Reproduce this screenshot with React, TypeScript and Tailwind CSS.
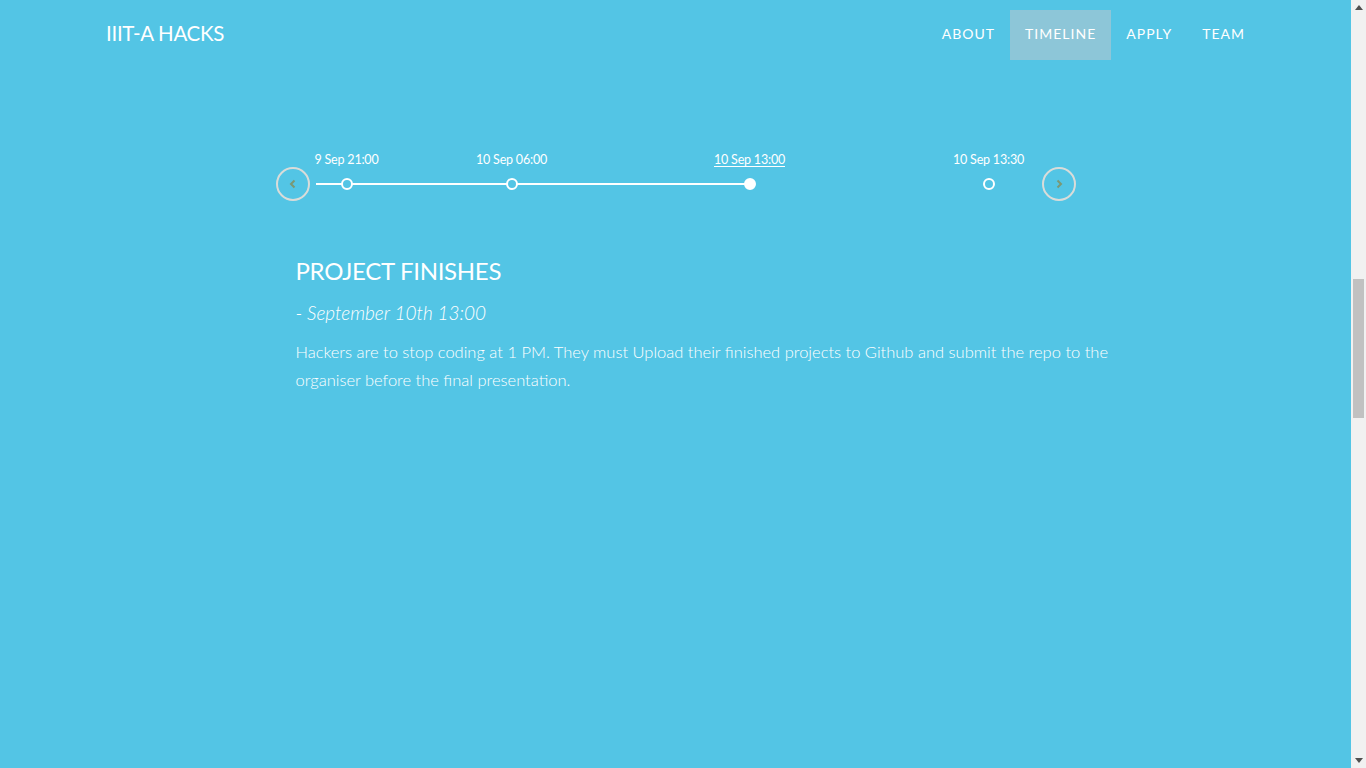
import React from "react";

const font = { fontFamily: '"Lato", "Open Sans", sans-serif' };

const events = [
  { label: "9 Sep 21:00", x: 31, filled: false, active: false },
  { label: "10 Sep 06:00", x: 196, filled: false, active: false },
  { label: "10 Sep 13:00", x: 434, filled: true, active: true },
  { label: "10 Sep 13:30", x: 673, filled: false, active: false },
];

function Arrow({ dir }: { dir: "left" | "right" }) {
  return (
    <button className="w-[34px] h-[34px] rounded-full border-2 border-[#d9dcd9] flex items-center justify-center shrink-0">
      <svg width="12" height="12" viewBox="0 0 12 12">
        {dir === "left" ? (
          <path d="M7.5 2.5 L4 6 L7.5 9.5" stroke="#7b9874" strokeWidth="2" fill="none" />
        ) : (
          <path d="M4.5 2.5 L8 6 L4.5 9.5" stroke="#7b9874" strokeWidth="2" fill="none" />
        )}
      </svg>
    </button>
  );
}

function ScrollBar() {
  return (
    <div className="w-[15px] h-[768px] bg-[#f1f1f1] flex flex-col items-center shrink-0">
      <div className="h-[15px] flex items-center justify-center">
        <svg width="8" height="5" viewBox="0 0 8 5">
          <path d="M0 5 L4 0 L8 5 Z" fill="#505050" />
        </svg>
      </div>
      <div className="flex-1 w-full flex flex-col">
        <div className="h-[264px]" />
        <div className="h-[139px] mx-[2px] bg-[#c1c1c1]" />
      </div>
      <div className="h-[15px] flex items-center justify-center">
        <svg width="8" height="5" viewBox="0 0 8 5">
          <path d="M0 0 L8 0 L4 5 Z" fill="#505050" />
        </svg>
      </div>
    </div>
  );
}

export default function App() {
  return (
    <div className="h-[768px] flex overflow-hidden bg-[#53c5e5] text-white" style={font}>
      <div className="flex-1">
        <nav className="flex items-center justify-between pl-[106px] pr-[91px] pt-[10px]">
          <div className="text-[20.5px] tracking-[-0.3px] leading-none pb-[4px]">IIIT-A HACKS</div>
          <ul className="flex text-[14px] tracking-[1px]">
            {["ABOUT", "TIMELINE", "APPLY", "TEAM"].map((n) => (
              <li
                key={n}
                className={
                  "h-[50px] flex items-center px-[15px] pb-[3px] " + (n === "TIMELINE" ? "bg-[#8dc6d8]" : "")
                }
              >
                {n}
              </li>
            ))}
          </ul>
        </nav>

        <section className="w-[800px] mx-auto mt-[99px]">
          <div className="flex items-center gap-[6px] h-[50px] relative">
            <Arrow dir="left" />
            <div className="relative flex-1 h-[50px]">
              <div className="absolute left-0 top-[24px] w-[434px] h-[2px] bg-white" />
              {events.map((e) => (
                <React.Fragment key={e.label}>
                  <div
                    className={
                      "absolute top-[-8px] leading-[18px] -translate-x-1/2 text-[12.5px] whitespace-nowrap tracking-[-0.2px] " +
                      (e.active ? "underline underline-offset-2" : "")
                    }
                    style={{ left: e.x }}
                  >
                    {e.label}
                  </div>
                  <div
                    className={
                      "absolute top-[19px] -translate-x-1/2 w-[12px] h-[12px] rounded-full border-2 border-white " +
                      (e.filled ? "bg-white" : "bg-[#53c5e5]")
                    }
                    style={{ left: e.x }}
                  />
                </React.Fragment>
              ))}
            </div>
            <Arrow dir="right" />
          </div>

          <div className="pl-[20px] mt-[47px]">
            <h2 className="text-[24px] leading-[30px] tracking-[-0.3px]">PROJECT FINISHES</h2>
            <div className="italic font-light text-[19px] mt-[14px] leading-[26px]">- September 10th 13:00</div>
            <p className="font-light text-[16.5px] leading-[28px] mt-[12px] w-[815px]">
              Hackers are to stop coding at 1 PM. They must Upload their finished projects to Github and submit the repo to the organiser before the final presentation.
            </p>
          </div>
        </section>
      </div>
      <ScrollBar />
    </div>
  );
}
